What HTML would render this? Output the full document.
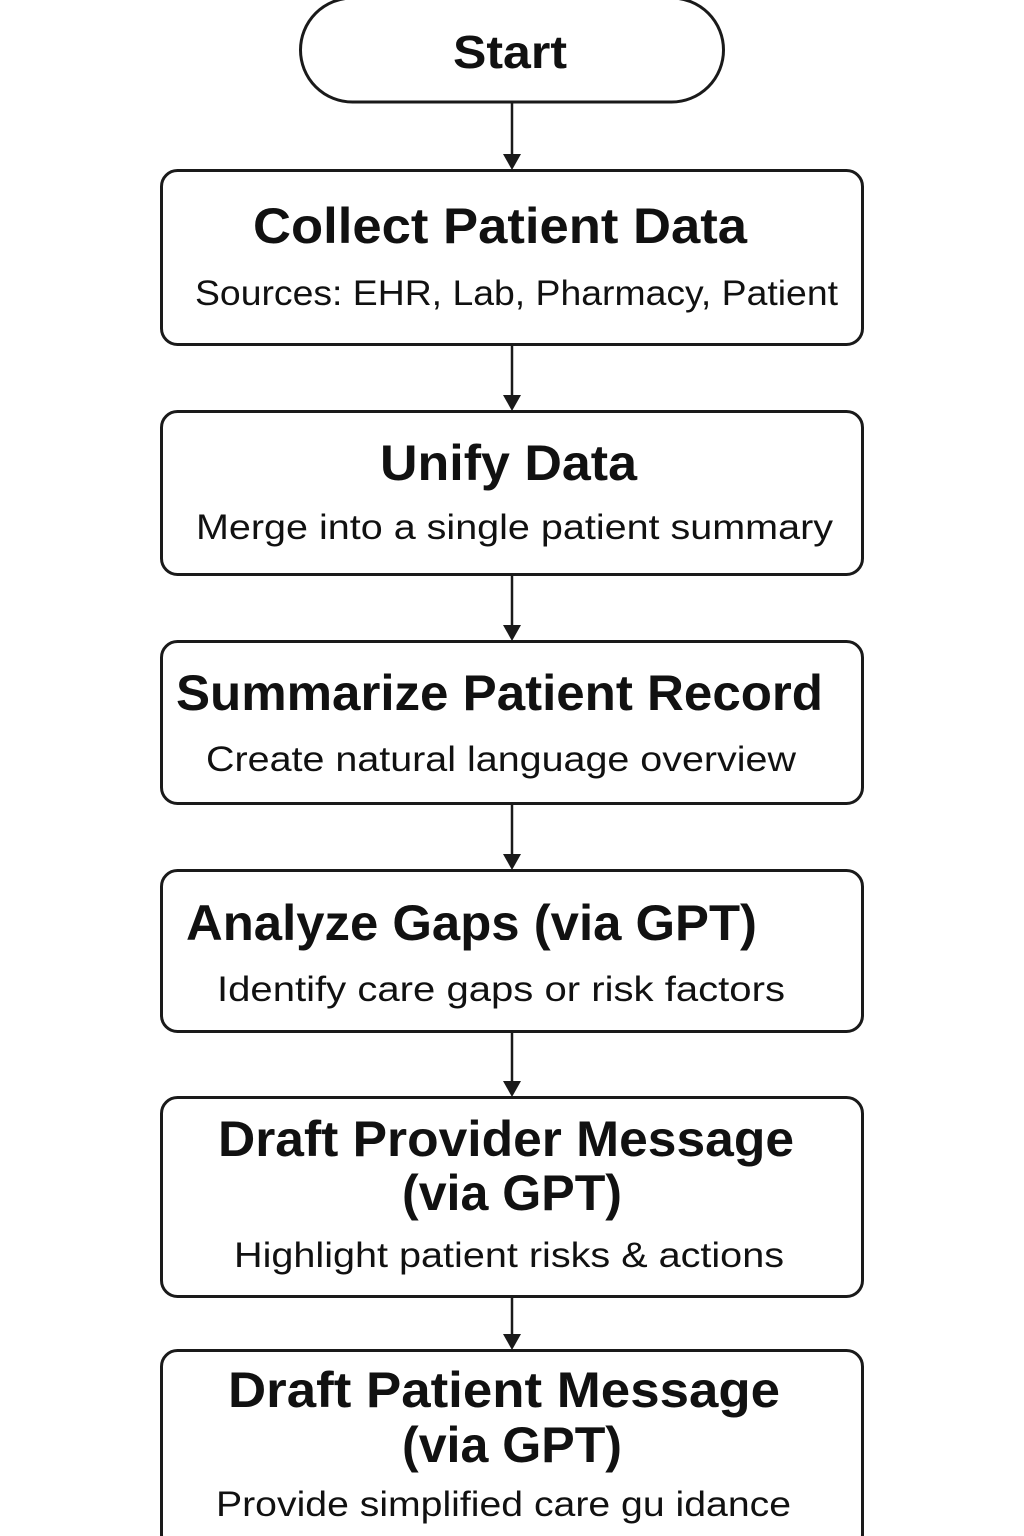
<!DOCTYPE html>
<html><head><meta charset="utf-8"><style>html,body{margin:0;padding:0;background:#fff}svg{display:block}</style></head>
<body>
<svg width="1024" height="1536" viewBox="0 0 1024 1536" xmlns="http://www.w3.org/2000/svg" font-family="Liberation Sans, sans-serif" fill="#111">
<g fill="none" stroke="#1a1a1a" stroke-width="3">
<rect x="300.5" y="-2" width="423" height="104" rx="52"/>
<rect x="161.5" y="170.5" width="701" height="174" rx="16"/>
<rect x="161.5" y="411.5" width="701" height="163" rx="16"/>
<rect x="161.5" y="641.5" width="701" height="162" rx="16"/>
<rect x="161.5" y="870.5" width="701" height="161" rx="16"/>
<rect x="161.5" y="1097.5" width="701" height="199" rx="16"/>
<rect x="161.5" y="1350.5" width="701" height="200" rx="16"/>
<path d="M512 103V160M512 345V400M512 575V630M512 804V859M512 1032V1086M512 1297V1339" stroke-width="2.5"/>
</g>
<g fill="#1a1a1a">
<path d="M503 154L512 170L521 154Z"/>
<path d="M503 395L512 411L521 395Z"/>
<path d="M503 625L512 641L521 625Z"/>
<path d="M503 854L512 870L521 854Z"/>
<path d="M503 1081L512 1097L521 1081Z"/>
<path d="M503 1334L512 1350L521 1334Z"/>
</g>
<g font-weight="bold" font-size="50" lengthAdjust="spacingAndGlyphs">
<text x="453" y="68" textLength="114" lengthAdjust="spacingAndGlyphs" font-size="46">Start</text>
<text x="253" y="243" textLength="494" lengthAdjust="spacingAndGlyphs">Collect Patient Data</text>
<text x="380" y="480" textLength="257" lengthAdjust="spacingAndGlyphs">Unify Data</text>
<text x="176" y="710" textLength="647" lengthAdjust="spacingAndGlyphs">Summarize Patient Record</text>
<text x="186" y="940" textLength="571" lengthAdjust="spacingAndGlyphs">Analyze Gaps (via GPT)</text>
<text x="218" y="1156" textLength="576" lengthAdjust="spacingAndGlyphs">Draft Provider Message</text>
<text x="402" y="1210" textLength="220" lengthAdjust="spacingAndGlyphs">(via GPT)</text>
<text x="228" y="1407" textLength="552" lengthAdjust="spacingAndGlyphs">Draft Patient Message</text>
<text x="402" y="1462" textLength="220" lengthAdjust="spacingAndGlyphs">(via GPT)</text>
</g>
<g font-size="35">
<text x="195" y="305" textLength="643" lengthAdjust="spacingAndGlyphs">Sources: EHR, Lab, Pharmacy, Patient</text>
<text x="196" y="539" textLength="637" lengthAdjust="spacingAndGlyphs">Merge into a single patient summary</text>
<text x="206" y="771" textLength="590" lengthAdjust="spacingAndGlyphs">Create natural language overview</text>
<text x="217" y="1001" textLength="568" lengthAdjust="spacingAndGlyphs">Identify care gaps or risk factors</text>
<text x="234" y="1267" textLength="550" lengthAdjust="spacingAndGlyphs">Highlight patient risks &amp; actions</text>
<text x="216" y="1516" textLength="575" lengthAdjust="spacingAndGlyphs">Provide simplified care gu idance</text>
</g>
</svg>
</body></html>
